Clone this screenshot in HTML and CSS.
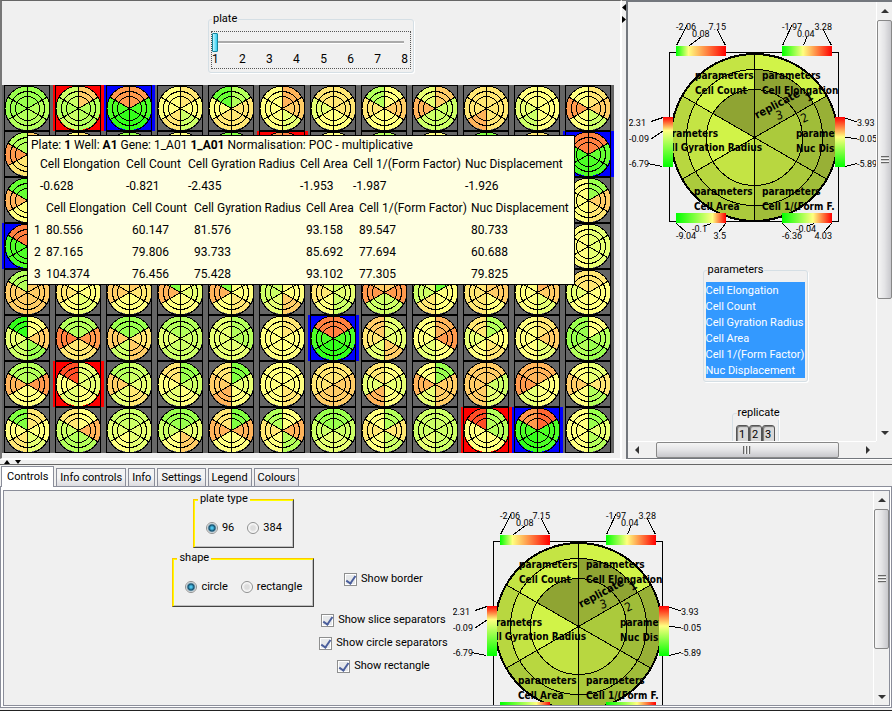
FILE: index.html
```html
<!DOCTYPE html>
<html lang="en">
<head>
<meta charset="utf-8">
<title>Plate viewer</title>
<link rel="stylesheet" href="styles.css">
</head>
<body>
<main class="top">
  <section class="plate-pane">
    <div class="slider-area">
      <fieldset class="etched plate-box">
        <legend>plate</legend>
        <div class="focus-ring">
          <input type="range" min="1" max="8" value="1" aria-label="plate">
          <div class="ticks"><span>1</span><span>2</span><span>3</span><span>4</span><span>5</span><span>6</span><span>7</span><span>8</span></div>
        </div>
      </fieldset>
    </div>
    <div class="plate">
      <div class="wells" id="wells"></div>
      <div class="tooltip" role="tooltip">
        <p>Plate: <b>1</b> Well: <b>A1</b> Gene: 1_A01 <b>1_A01</b> Normalisation: POC - multiplicative</p>
        <table class="summary">
          <tr><th>Cell Elongation</th><th>Cell Count</th><th>Cell Gyration Radius</th><th>Cell Area</th><th>Cell 1/(Form Factor)</th><th>Nuc Displacement</th></tr>
          <tr><td>-0.628</td><td>-0.821</td><td>-2.435</td><td>-1.953</td><td>-1.987</td><td>-1.926</td></tr>
        </table>
        <table class="replicates">
          <tr><th></th><th>Cell Elongation</th><th>Cell Count</th><th>Cell Gyration Radius</th><th>Cell Area</th><th>Cell 1/(Form Factor)</th><th>Nuc Displacement</th></tr>
          <tr><td>1</td><td>80.556</td><td>60.147</td><td>81.576</td><td>93.158</td><td>89.547</td><td>80.733</td></tr>
          <tr><td>2</td><td>87.165</td><td>79.806</td><td>93.733</td><td>85.692</td><td>77.694</td><td>60.688</td></tr>
          <tr><td>3</td><td>104.374</td><td>76.456</td><td>75.428</td><td>93.102</td><td>77.305</td><td>79.825</td></tr>
        </table>
      </div>
    </div>
  </section>
  <div class="divider-v"><svg width="4" height="24"><path d="M4 3V10L0 6.500zM0 15V22L4 18.500z"/></svg></div>
  <aside class="side">
    <div class="side-view">
      <div class="side-content">
        <svg class="wheel" width="252" height="226" viewBox="629 16 252 226">
          <defs>
            <linearGradient id="g1"><stop offset="0" stop-color="#0f0"/><stop offset=".25" stop-color="#ffff80"/><stop offset="1" stop-color="#f00"/></linearGradient>
            <linearGradient id="g2"><stop offset="0" stop-color="#0f0"/><stop offset=".42" stop-color="#ffff80"/><stop offset="1" stop-color="#f00"/></linearGradient>
            <linearGradient id="g3"><stop offset="0" stop-color="#0f0"/><stop offset=".73" stop-color="#ffff80"/><stop offset="1" stop-color="#f00"/></linearGradient>
            <linearGradient id="g4"><stop offset="0" stop-color="#0f0"/><stop offset=".62" stop-color="#ffff80"/><stop offset="1" stop-color="#f00"/></linearGradient>
            <linearGradient id="g5" x2="0" y2="1"><stop offset="0" stop-color="#f00"/><stop offset=".27" stop-color="#ffff80"/><stop offset="1" stop-color="#0f0"/></linearGradient>
            <linearGradient id="g6" x2="0" y2="1"><stop offset="0" stop-color="#f00"/><stop offset=".4" stop-color="#ffff80"/><stop offset="1" stop-color="#0f0"/></linearGradient>
            <clipPath id="inside"><rect x="673" y="46" width="165" height="177"/></clipPath>
          </defs>
          <g id="wheel">
            <g id="wheel-slices"></g>
            <g class="ink">
              <rect x="669.5" y="52.5" width="169" height="169"/>
              <circle cx="754.5" cy="137.5" r="84"/><circle cx="754.5" cy="137.5" r="83"/>
              <circle cx="754.5" cy="137.5" r="68"/><circle cx="754.5" cy="137.5" r="48"/>
              <path d="M754.5 53V221M681.7 95.5L827.3 179.5M681.7 179.5L827.3 95.5"/>
            </g>
            <g class="names">
              <text x="695" y="79">parameters</text><text x="695" y="94">Cell Count</text>
              <text x="762" y="79">parameters</text><text x="762" y="94">Cell Elongation</text>
              <text x="694" y="195">parameters</text><text x="694" y="210">Cell Area</text>
              <text x="762" y="195">parameters</text><text x="762" y="210">Cell 1/(Form F.</text>
              <text class="big" transform="translate(757 119) rotate(-28)">replicate</text>
              <text class="big" transform="translate(808 102) rotate(-30)">1</text>
              <text class="big thin" transform="translate(777 120) rotate(-15)">3</text>
              <text class="big thin" transform="translate(803 123) rotate(-25)">2</text>
            </g>
            <g class="names" clip-path="url(#inside)">
              <text x="718" y="137" text-anchor="end">parameters</text><text x="762" y="151" text-anchor="end">Cell Gyration Radius</text>
              <text x="796" y="137">parameters</text><text x="796" y="152">Nuc Displacement</text>
            </g>
            <rect x="676" y="46" width="50" height="10" fill="url(#g1)"/><rect x="782" y="46" width="50" height="10" fill="url(#g2)"/>
            <rect x="676" y="213" width="50" height="10" fill="url(#g3)"/><rect x="782" y="213" width="50" height="10" fill="url(#g4)"/>
            <rect x="663" y="117" width="10" height="50" fill="url(#g5)"/><rect x="835" y="117" width="10" height="50" fill="url(#g6)"/>
            <path class="ink" d="M676.5 45.5L687 25M689.500 45.500L701 37M725.500 45.500L717 29M782.500 45.500L792 25M803.500 45.500L807 37M831.500 45.500L823 29M676.500 223.500L686 232M711.500 223.500L704 226M725.500 223.500L719 232M782.500 223.500L791 232M814.500 223.500L807 226M831.500 223.500L824 232M651 121.500L663 117.500M651 139L663 131M648 163.500L662 166.500M845.500 118L857 122M845.500 137.500L857 138.500M845.500 166.500L857 163.500"/>
            <g class="nums">
              <text x="676" y="30">-2.06</text><text x="692" y="37">0.08</text><text x="726" y="30" text-anchor="end">7.15</text>
              <text x="782" y="30">-1.97</text><text x="797" y="37">0.04</text><text x="832" y="30" text-anchor="end">3.28</text>
              <text x="676" y="239">-9.04</text><text x="692" y="232">-0.1</text><text x="726" y="239" text-anchor="end">3.5</text>
              <text x="782" y="239">-6.36</text><text x="796" y="232">-0.04</text><text x="832" y="239" text-anchor="end">4.03</text>
              <text x="646" y="126" text-anchor="end">2.31</text><text x="649" y="142" text-anchor="end">-0.09</text><text x="649" y="167" text-anchor="end">-6.79</text>
              <text x="857" y="126">3.93</text><text x="857" y="142">-0.05</text><text x="857" y="167">-5.89</text>
            </g>
          </g>
        </svg>
        <fieldset class="etched params">
          <legend>parameters</legend>
          <select multiple size="6" aria-label="parameters">
            <option selected>Cell Elongation</option><option selected>Cell Count</option><option selected>Cell Gyration Radius</option><option selected>Cell Area</option><option selected>Cell 1/(Form Factor)</option><option selected>Nuc Displacement</option>
          </select>
        </fieldset>
        <fieldset class="etched repl">
          <legend>replicate</legend>
          <div class="repl-buttons"><button>1</button><button>2</button><button>3</button></div>
        </fieldset>
      </div>
    </div>
    <div class="scroll-v side-scroll">
      <button aria-label="Scroll up"><svg width="8" height="4"><path d="M4 0L8 4H0z"/></svg></button>
      <div class="track"><div class="thumb"><i></i></div></div>
      <button aria-label="Scroll down"><svg width="8" height="4"><path d="M0 0H8L4 4z"/></svg></button>
    </div>
    <div class="scroll-h">
      <button aria-label="Scroll left"><svg width="4" height="8"><path d="M4 0V8L0 4z"/></svg></button>
      <div class="track"><div class="thumb"><i></i></div></div>
      <button aria-label="Scroll right"><svg width="4" height="8"><path d="M0 0V8L4 4z"/></svg></button>
    </div>
  </aside>
  <div class="divider-h"><svg width="24" height="4"><path d="M4 4H10L7 0zM15 0H21L18 4z"/></svg></div>
</main>

<section class="bottom">
  <div class="tabs" role="tablist">
    <button role="tab" aria-selected="true">Controls</button><button role="tab">Info controls</button><button role="tab">Info</button><button role="tab">Settings</button><button role="tab">Legend</button><button role="tab">Colours</button>
  </div>
  <div class="tab-frame">
    <div class="tab-body">
      <div class="controls">
        <div class="groups">
          <fieldset class="bevel">
            <legend>plate type</legend>
            <label><input type="radio" name="type" checked>96</label>
            <label><input type="radio" name="type">384</label>
          </fieldset>
          <fieldset class="bevel">
            <legend>shape</legend>
            <label><input type="radio" name="shape" checked>circle</label>
            <label><input type="radio" name="shape">rectangle</label>
          </fieldset>
        </div>
        <div class="checks">
          <label class="first"><input type="checkbox" checked>Show border</label>
          <label><input type="checkbox" checked>Show slice separators</label>
          <label><input type="checkbox" checked>Show circle separators</label>
          <label><input type="checkbox" checked>Show rectangle</label>
        </div>
        <svg class="wheel" width="252" height="226" viewBox="629 16 252 226"><use href="#wheel"/></svg>
      </div>
      <div class="scroll-v tab-scroll">
        <button aria-label="Scroll up"><svg width="8" height="4"><path d="M4 0L8 4H0z"/></svg></button>
        <div class="track"><div class="thumb"><i></i></div></div>
        <button aria-label="Scroll down"><svg width="8" height="4"><path d="M0 0H8L4 4z"/></svg></button>
      </div>
    </div>
  </div>
</section>
<script src="plate.js"></script>
</body>
</html>
```
FILE: styles.css
```css
* { box-sizing: border-box; }

body {
  margin: 0;
  height: 100vh;
  display: grid;
  grid-template-rows: minmax(0, 464fr) minmax(0, 247fr);
  overflow: hidden;
  background: #f0f0f0;
  color: #000;
  font: 11px/14px Roboto, "Liberation Sans", sans-serif;
}

button, input, select { font: inherit; color: inherit; margin: 0; }
svg { display: block; }

/* upper split pane */
.top {
  display: grid;
  grid-template-columns: minmax(0, 1fr) 4px 266px;
  grid-template-rows: minmax(0, 1fr) 5px;
}
.plate-pane {
  border-top: 1px solid #666;
  border-left: 2px solid #777;
  border-right: 2px solid #fff;
  border-bottom: 1px solid #fff;
  overflow: hidden;
}
.divider-v { border-top: 1px solid #777; }
.divider-h { grid-column: 1 / -1; border-top: 1px solid #fff; }

.slider-area { height: 84px; padding-top: 11px; display: flex; justify-content: center; align-items: flex-start; }
.etched { margin: 0; border: 1px solid #d5dfe5; border-radius: 3px; box-shadow: 1px 1px #fff; }
.etched legend { padding: 0 1px; margin-left: 1px; height: 14px; }
.plate-box { width: 206px; padding: 5px 2px 3px; }
.focus-ring { border: 1px dotted #555; height: 38px; padding: 1px 2px 1px 0; font-size: 12px; }
input[type=range] { appearance: none; display: block; width: 100%; height: 19px; background: none; }
input[type=range]::-webkit-slider-runnable-track {
  height: 19px;
  background: linear-gradient(#aaa 0 2px, #fff 2px 3px) center / calc(100% - 8px) 3px no-repeat;
}
input[type=range]::-webkit-slider-thumb {
  appearance: none;
  width: 6px;
  height: 19px;
  border: 1px solid #16849c;
  border-radius: 1px;
  background: linear-gradient(90deg, #c6f7ff, #2fcdf0);
}
.ticks { display: flex; justify-content: space-between; }

.plate { position: relative; }
.wells { display: grid; grid-template-columns: repeat(12, 51px); width: max-content; background: #666; }
.wells svg { width: 51px; height: 46px; shape-rendering: crispEdges; }
.line { fill: none; stroke: #000; }

.tooltip {
  position: absolute;
  left: 25px;
  top: 50px;
  width: 548px;
  height: 150px;
  padding: 2px 3px;
  border: 1px solid #000;
  background: #ffffe1;
  font-size: 12px;
  line-height: 14px;
  white-space: nowrap;
}
.tooltip p { margin: 0 0 1px; }
.tooltip table { border-collapse: collapse; table-layout: fixed; }
.tooltip th { font-weight: normal; }
.tooltip th, .tooltip td { height: 22px; padding: 0; text-align: left; }
.summary { width: 537px; margin-left: 9px; }
.replicates { width: 537px; margin-left: 3px; }
.summary th:nth-child(1), .replicates th:nth-child(2) { width: 86px; }
.summary th:nth-child(2), .replicates th:nth-child(3) { width: 62px; }
.summary th:nth-child(3), .replicates th:nth-child(4) { width: 112px; }
.summary th:nth-child(4), .replicates th:nth-child(5) { width: 53px; }
.summary th:nth-child(5), .replicates th:nth-child(6) { width: 112px; }
.replicates th:nth-child(1) { width: 12px; }

/* right pane */
.side {
  display: grid;
  grid-template-columns: minmax(0, 1fr) 16px;
  grid-template-rows: minmax(0, 1fr) 17px;
  border: solid #73777d;
  border-width: 2px 0 1px 2px;
}
.side-view { overflow: hidden; }
.side-content { width: 254px; padding-top: 14px; display: flex; flex-direction: column; align-items: center; }
.wheel { flex: none; shape-rendering: crispEdges; }
.ink { fill: none; stroke: #000; }
.names { font: bold 10px "DejaVu Sans Condensed", "DejaVu Sans", sans-serif; }
.names .big { font-size: 11px; }
.names .thin { font-weight: normal; font-size: 12px; }
.nums { font: 9px Roboto, sans-serif; }
.params { margin-top: 21px; padding: 5px 2px 3px; width: 105px; }
.params select {
  display: block;
  width: 100%;
  height: 96px;
  border: 0;
  border-radius: 0;
  padding: 0;
  overflow: hidden;
  background: #39f;
  outline: 0;
}
.params option { height: 16px; min-height: 16px; padding: 2px 0 0; line-height: 14px; }
.params option:checked { color: #fff; background: linear-gradient(#39f, #39f); }
.repl { margin-top: 24px; padding: 5px 3px 4px; width: 47px; min-width: 0; }
.repl legend { white-space: nowrap; width: 43px; }
.repl-buttons { display: flex; }
.repl button {
  width: 13px;
  height: 20px;
  padding: 0;
  border: 1px solid #555;
  border-radius: 3px;
  background: #d8d8d8;
  box-shadow: inset 1px 1px 1px #777;
}

/* scroll bars */
.scroll-v, .scroll-h { display: flex; background: #f0f0f0; }
.scroll-v { flex-direction: column; border-left: 1px solid #fff; }
.scroll-h { grid-column: 1; border-top: 1px solid #fff; }
.scroll-v button, .scroll-h button { display: grid; place-items: center; flex: 0 0 17px; padding: 0; border: 0; background: none; }
.scroll-v svg, .scroll-h svg { fill: #333; }
.track { flex: 1; display: flex; min-height: 0; min-width: 0; }
.scroll-v .track { flex-direction: column; }
.thumb { display: grid; place-items: center; border: 1px solid #888; border-radius: 2px; }
.scroll-v .thumb { background: linear-gradient(90deg, #f5f5f5, #e4e4e6 50%, #c8c8cc); }
.scroll-h .thumb { background: linear-gradient(#f5f5f5, #e4e4e6 50%, #c8c8cc); }
.scroll-v i { width: 8px; height: 8px; background: repeating-linear-gradient(#666 0 1px, #ccc 1px 2px, #f5f5f5 2px 3px); }
.scroll-h i { width: 8px; height: 8px; background: repeating-linear-gradient(90deg, #666 0 1px, #ccc 1px 2px, #f5f5f5 2px 3px); }
.side-scroll .thumb { height: 69%; margin-top: 1px; }
.scroll-h .track { padding-left: 11px; }
.scroll-h .thumb { width: 90%; }
.tab-scroll .thumb { height: 78%; margin-top: 1px; }

/* lower tabbed pane */
.bottom {
  display: flex;
  flex-direction: column;
  border-top: 1px solid #666;
  border-bottom: 1px solid #222;
  padding: 1px 0 2px;
  min-height: 0;
}
.tabs { display: flex; align-items: flex-end; gap: 2px; height: 20px; padding-left: 1px; }
.tabs button {
  height: 18px;
  padding: 0 3px;
  border: 1px solid #8b8e9a;
  border-bottom: 0;
  background: linear-gradient(#f4f4f4 50%, #dcdce0);
  line-height: 17px;
}
.tabs button[aria-selected=true] {
  height: 21px;
  margin-bottom: -1px;
  padding: 0 5px 2px;
  background: #fff;
  z-index: 1;
}
.tab-frame { flex: 1; min-height: 0; border: 1px solid #8b8e9a; padding: 3px 1px 1px 2px; background: #fff; }
.tab-body { height: 100%; display: flex; border: 1px solid #8b8e9a; background: #f0f0f0; overflow: hidden; }
.controls { flex: 1; display: flex; justify-content: center; align-items: flex-start; gap: 5px; overflow: hidden; }
.controls .wheel { margin-top: 14px; }
.tab-scroll { flex: 0 0 16px; }
.groups { display: flex; flex-direction: column; align-items: center; gap: 3px; padding-top: 1px; }
.bevel {
  display: flex;
  gap: 13px;
  margin: 0;
  height: 56px;
  padding: 15px 11px 0 12px;
  border: 1px solid;
  border-color: #ffc800 #444 #444 #ffc800;
  box-shadow: inset 1px 1px #ff0, inset -1px -1px #c0c0c0;
}
.bevel legend { padding: 0 2px; margin-left: -8px; background: #f0f0f0; }
.bevel label, .checks label { display: flex; align-items: center; gap: 4px; height: 14px; }
input[type=radio] {
  appearance: none;
  width: 12px;
  height: 12px;
  border: 1px solid #8e8f8f;
  border-radius: 50%;
  background: radial-gradient(circle, #ddd 30%, #fff 70%);
}
input[type=radio]:checked { background: radial-gradient(circle at 50% 50%, #4cc4ec 0 1px, #14506f 3px, #fff 5px); }
.checks { display: flex; flex-direction: column; align-items: center; gap: 9px; padding-top: 81px; }
.checks .first { margin-bottom: 18px; }
input[type=checkbox] {
  appearance: none;
  width: 13px;
  height: 13px;
  border: 1px solid #8e8f8f;
  background: #e6e8ea;
  box-shadow: inset 0 0 0 1px #fff;
  display: grid;
  place-items: center;
}
input[type=checkbox]:checked::before {
  content: "";
  width: 4px;
  height: 8px;
  border: solid #4b5f9c;
  border-width: 0 2px 2px 0;
  transform: rotate(35deg);
}
```
FILE: plate.js
```js
// One string per plate row. Six letters per well, one per slice, counter-clockwise
// from the top right. a-j: increasingly green, A-J: increasingly red.
// An "r" or "b" after a colon marks a highlighted well.
const rows = [
  "eeeddd Ccdcdd:r EEhiih:b BAABca dgaBBB DAaabC BBbaaB AdBAAC CbDccc BBBDBB AAbcaA BAEAcC",
  "CdEBab BAaaaa eeaaaa aAaaaa ffaaaa FEaaaa:r AAaaaa ddaaaa aaaaaa ffaaaa BBaaaa FFhhhg:b",
  "agDaaa aaaaaa aaaaaa aaaaaa aaaaaa aaaaaa aaaaaa aaaaaa aaaaaa aaaaaa aaaaaa eaaABC",
  "FFhhhh:b aaaaaa aaaaaa aaaaaa aaaaaa aaaaaa aaaaaa aaaaaa aaaaaa aaaaaa aaaaaa baaAbb",
  "CdCCCC AaBAbA CBCaaB afDaab afDABA AccbCA cbBAcb CCEccE gbcBAA CBBBAC DAaabC BBbaaA",
  "AibceC ddFBBE eeCcCB ddbccc dbbbbd BaaaaA FFhiih:b bCBbCb DAabaE dBbaBa BAaAbC Aeeded",
  "ddDaAE bHabAb:r cdCbBb eBAbac fBCDab AAAABA BBBCCC ABbDab eaDbCC CCCCbc DDEbAA baCadB",
  "BfaBba ABcddD ccbabb eecaCb fBDaAD AdBadD eecbbc dABAcB cccbcc dHaaad:r GEhihh:b eAaAdb"
];

function tone(letter) {
  const green = letter >= "a";
  const t = (letter.toLowerCase().charCodeAt(0) - 97) / 10;
  const blue = Math.round(128 * (1 - t));
  const fade = Math.round(255 * (1 - t));
  return green ? `rgb(${fade},255,${blue})` : `rgb(255,${fade},${blue})`;
}

function slice(cx, cy, r, index, fill) {
  const start = (30 + index * 60) * Math.PI / 180;
  const end = start + Math.PI / 3;
  const p = a => `${cx + r * Math.cos(a)} ${cy - r * Math.sin(a)}`;
  return `<path d="M${cx} ${cy}L${p(start)}A${r} ${r} 0 0 0 ${p(end)}z" fill="${fill}"/>`;
}

const backs = { r: "#f00", b: "#00f" };
document.getElementById("wells").innerHTML = rows.map(row => row.split(" ").map(code => {
  const [tones, mark] = code.split(":");
  const back = mark ? `<rect width="51" height="46" fill="${backs[mark]}"/>` : "";
  const slices = [...tones].map((t, i) => slice(25.5, 23, 22, i, tone(t))).join("");
  return `<svg viewBox="0 0 51 46">${back}${slices}<g class="line">
    <rect x="2.5" y="0.5" width="45" height="45"/>
    <circle cx="25.5" cy="23.5" r="22.5"/><circle cx="25.5" cy="23.5" r="17"/><circle cx="25.5" cy="23.5" r="12"/>
    <path d="M25.5 0V46M6.500 12.500L44.500 34.500M6.500 34.500L44.500 12.500"/></g></svg>`;
}).join("")).join("");

// Outer, middle and inner ring fills for each of the six parameters.
const rings = [
  [84, ["#d1f348", "#c4e444", "#b8d740", "#abca3c", "#a0bd39", "#98b036"]],
  [68, ["#8fa433", "#d1f348", "#c4e444", "#b8d740", "#abca3c", "#a0bd39"]],
  [48, ["#98b036", "#8fa433", "#d1f348", "#c4e444", "#b8d740", "#abca3c"]]
];
document.getElementById("wheel-slices").innerHTML =
  rings.map(([r, fills]) => fills.map((f, i) => slice(754.5, 137.5, r, i, f)).join("")).join("");
```
